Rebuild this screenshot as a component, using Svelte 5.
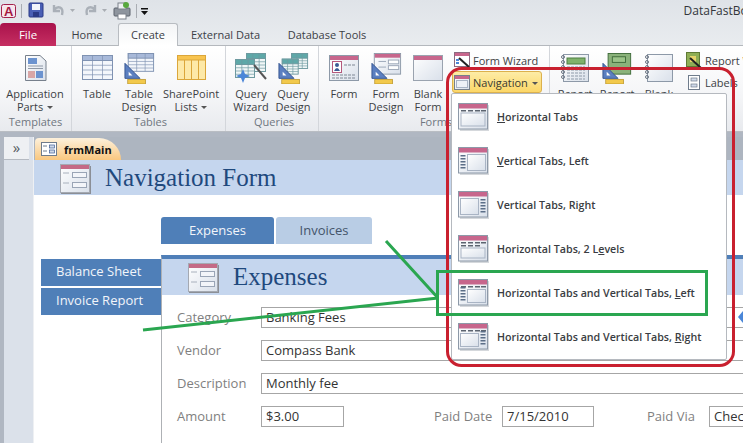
<script>
	const navItems = [
		{ pre: '', key: 'H', post: 'orizontal Tabs', kind: 'h' },
		{ pre: '', key: 'V', post: 'ertical Tabs, Left', kind: 'vl' },
		{ pre: 'Vertical Tabs, Ri', key: 'g', post: 'ht', kind: 'vr' },
		{ pre: 'Horizontal Tabs, 2 L', key: 'e', post: 'vels', kind: 'h2' },
		{ pre: 'Horizontal Tabs and Vertical Tabs, ', key: 'L', post: 'eft', kind: 'hvl' },
		{ pre: 'Horizontal Tabs and Vertical Tabs, ', key: 'R', post: 'ight', kind: 'hvr' }
	];

	const rows = [0, 1, 2, 3, 4];
</script>

{#snippet triangle()}
	<path d="M0 11 L0 27 L16 27 Z" fill="#5b7fc0" stroke="#34548f" />
	<path d="M4 20 L4 24 L8 24 Z" fill="#fff" />
	<rect x="3" y="28" width="19" height="5" fill="#f2c94c" stroke="#b08a20" stroke-width="0.7" />
{/snippet}

{#snippet grid(x, y, w, h, head, line, fill)}
	<rect {x} {y} width={w} height={h} fill={fill} stroke={line} />
	<rect {x} {y} width={w} height="5" fill={head} stroke={line} />
	{#each [1, 2] as i}
		<line x1={x + (w * i) / 3} y1={y} x2={x + (w * i) / 3} y2={y + h} stroke={line} stroke-width="0.7" />
	{/each}
	{#each [1, 2, 3] as i}
		<line x1={x} y1={y + 5 + ((h - 5) * i) / 4} x2={x + w} y2={y + 5 + ((h - 5) * i) / 4} stroke={line} stroke-width="0.7" />
	{/each}
{/snippet}

{#snippet navIcon(kind)}
	<svg class="navicon" width="31" height="28" viewBox="0 0 31 28">
		<rect x="2" y="2" width="29" height="26" fill="#d5d8dc" />
		<rect x="0.5" y="0.5" width="29" height="25.5" fill="url(#paper)" stroke="#8d99a8" />
		<rect x="1" y="1" width="28" height="4.5" fill="#c7668c" />
		{#if kind === 'h' || kind === 'h2' || kind === 'hvl' || kind === 'hvr'}
			{#each [3, 10, 17, 23] as x}
				<rect {x} y="7" width="5" height="1.5" fill="#5c6470" />
			{/each}
		{/if}
		{#if kind === 'h2'}
			{#each [3, 10, 17] as x}
				<rect {x} y="10" width="5" height="1.5" fill="#5c6470" />
			{/each}
		{/if}
		{#if kind === 'vl' || kind === 'hvl'}
			{#each [8, 11, 14, 17, 20] as y}
				<rect x="2.5" {y} width="5" height="1.5" fill="#5c6f88" />
			{/each}
		{/if}
		{#if kind === 'vr' || kind === 'hvr'}
			{#each [8, 11, 14, 17, 20] as y}
				<rect x="22.5" {y} width="5" height="1.5" fill="#5c6f88" />
			{/each}
		{/if}
		{#if kind === 'h'}
			<rect x="3" y="10" width="24" height="13" fill="url(#paper)" stroke="#a9b4c4" />
		{:else if kind === 'h2'}
			<rect x="3" y="13" width="24" height="10" fill="url(#paper)" stroke="#a9b4c4" />
		{:else if kind === 'vl' || kind === 'hvl'}
			<rect x="9.5" y={kind === 'vl' ? 7.5 : 10.5} width="18" height={kind === 'vl' ? 16 : 13} fill="url(#paper)" stroke="#a9b4c4" />
		{:else}
			<rect x="2.5" y={kind === 'vr' ? 7.5 : 10.5} width="18" height={kind === 'vr' ? 16 : 13} fill="url(#paper)" stroke="#a9b4c4" />
		{/if}
	</svg>
{/snippet}

{#snippet formIcon()}
	<svg class="formicon" width="31" height="30" viewBox="0 0 31 30">
		<rect x="1" y="2" width="30" height="28" fill="#8b8f96" />
		<rect x="0.5" y="0.5" width="29" height="28" fill="url(#paper)" stroke="#a4a9b2" />
		<rect x="1" y="1" width="28" height="4" fill="#c46a86" />
		<line x1="3" y1="9" x2="9" y2="9" stroke="#a8b0bc" />
		<rect x="12.5" y="8.5" width="14" height="5" fill="#f3f5f9" stroke="#9aa5b6" />
		<line x1="3" y1="19" x2="9" y2="19" stroke="#a8b0bc" />
		<rect x="12.5" y="18.5" width="14" height="5" fill="#f3f5f9" stroke="#9aa5b6" />
	</svg>
{/snippet}

<div class="app">
	<svg class="defs" width="0" height="0">
		<defs>
			<linearGradient id="paper" x1="0" y1="0" x2="1" y2="1">
				<stop offset="0" stop-color="#ffffff" />
				<stop offset="1" stop-color="#d9e0ea" />
			</linearGradient>
		</defs>
	</svg>

	<header class="titlebar">
		<svg width="150" height="23" viewBox="0 0 150 23">
			<rect x="1.5" y="4.5" width="14" height="13" rx="2" fill="#f6e6ec" stroke="#a3224c" />
			<text x="4" y="16" font-family="Liberation Sans" font-weight="700" font-size="13" fill="#a3173f">A</text>
			<line x1="21.5" y1="4" x2="21.5" y2="18" stroke="#a9adb3" />
			<rect x="29" y="3" width="14" height="14" rx="1" fill="#4a5fb5" stroke="#2b3a86" />
			<rect x="32" y="4" width="8" height="6" fill="#f3f5fb" />
			<rect x="33" y="12" width="6" height="5" fill="#2b3a86" />
			<path d="M54 5 V11 H60 M54 10 C58 5 64 7 62 15" fill="none" stroke="#aab0b8" stroke-width="2.4" />
			<path d="M70 9 h5 l-2.5 3 z" fill="#a9adb3" />
			<path d="M95 5 V11 H89 M95 10 C91 5 85 7 87 15" fill="none" stroke="#aab0b8" stroke-width="2.4" />
			<path d="M102 9 h5 l-2.5 3 z" fill="#a9adb3" />
			<rect x="114" y="8" width="16" height="8" rx="1" fill="#8e959e" stroke="#5c636c" />
			<rect x="118" y="3" width="8" height="6" fill="#eef0f3" stroke="#7c828b" />
			<rect x="118" y="14" width="8" height="5" fill="#fff" stroke="#7c828b" />
			<circle cx="126" cy="5" r="3" fill="#58a83e" />
			<line x1="136.500" y1="4" x2="136.500" y2="18" stroke="#a9adb3" />
			<rect x="141" y="8" width="7" height="1.500" fill="#111" />
			<path d="M141 11 h7 l-3.500 4 z" fill="#111" />
		</svg>
		<span class="doctitle">DataFastBooks</span>
	</header>

	<nav class="tabs">
		<span class="tab file">File</span>
		<span class="tab home">Home</span>
		<span class="tab create">Create</span>
		<span class="tab external">External Data</span>
		<span class="tab tools">Database Tools</span>
	</nav>

	<section class="ribbon">
		<div class="group g1">
			<div class="items">
				<div class="big wide">
					<svg width="31" height="27" viewBox="0 0 31 27">
						<path d="M5.500 .5 H20 L26 6 V25.500 H5.500 Z" fill="url(#paper)" stroke="#77808c" />
						<rect x="8" y="3" width="9" height="6" fill="#6c93cf" />
						<path d="M8 11 H23 M8 13.500 H23" stroke="#8e98a6" />
						<rect x="8" y="16" width="7" height="7" fill="#d9a6a6" />
						<rect x="16" y="16" width="7" height="7" fill="#6c93cf" />
					</svg>
					<span>Application Parts <i class="caret"></i></span>
				</div>
			</div>
			<div class="glabel">Templates</div>
		</div>

		<div class="group g2">
			<div class="items">
				<div class="big">
					<svg width="31" height="27" viewBox="0 0 31 27">
						{@render grid(0.5, 0.5, 30, 24, '#a8b9d9', '#7f92b2', '#f3f6fb')}
					</svg>
					<span>Table</span>
				</div>
				<div class="big">
					<svg width="31" height="31" viewBox="0 0 31 33">
						{@render grid(3.5, 0.5, 27, 19, '#a8b9d9', '#7f92b2', '#f3f6fb')}
						{@render triangle()}
					</svg>
					<span>Table Design</span>
				</div>
				<div class="big share">
					<svg width="31" height="27" viewBox="0 0 31 27">
						<rect x="1.500" y="0.500" width="28" height="24" fill="#fde9a8" stroke="#dba63a" />
						<rect x="1.500" y="0.500" width="28" height="4.500" fill="#f8c44f" stroke="#dba63a" />
						<path d="M8.500 5 V24 M15.500 5 V24 M22.500 5 V24" stroke="#dba63a" />
					</svg>
					<span>SharePoint Lists <i class="caret"></i></span>
				</div>
			</div>
			<div class="glabel">Tables</div>
		</div>

		<div class="group g3">
			<div class="items">
				<div class="big">
					<svg width="34" height="31" viewBox="0 0 34 31">
						{@render grid(12.5, 0.5, 19, 18, '#5ea8a8', '#6e9aa0', '#f1f7f7')}
						{@render grid(1.5, 6.5, 19, 18, '#5ea8a8', '#6e9aa0', '#f1f7f7')}
						<path d="M20 12 L32 26" stroke="#555" stroke-width="2" />
						<path d="M9 16 L11 21 L16 23 L11 25 L9 30 L7 25 L2 23 L7 21 Z" fill="#4b86d8" />
					</svg>
					<span>Query Wizard</span>
				</div>
				<div class="big">
					<svg width="31" height="31" viewBox="0 0 31 33">
						{@render grid(13.5, 0.5, 17, 16, '#5ea8a8', '#6e9aa0', '#f1f7f7')}
						{@render grid(3.5, 6.5, 17, 16, '#5ea8a8', '#6e9aa0', '#f1f7f7')}
						{@render triangle()}
					</svg>
					<span>Query Design</span>
				</div>
			</div>
			<div class="glabel">Queries</div>
		</div>

		<div class="group g4">
			<div class="items">
				<div class="big">
					<svg width="31" height="27" viewBox="0 0 31 27">
						<rect x="0.500" y="0.500" width="29" height="25" fill="url(#paper)" stroke="#8d99a8" />
						<rect x="1" y="1" width="28" height="4" fill="#c7668c" />
						<rect x="3.500" y="6.500" width="9" height="11" fill="#fff" stroke="#b5597c" />
						<circle cx="8" cy="10" r="2" fill="#3d5c94" />
						<path d="M5 16 Q8 10 11 16 Z" fill="#3d5c94" />
						<path d="M15 10 H27 M3 20 H27 M3 23 H27" stroke="#7e8794" stroke-dasharray="3 1" />
					</svg>
					<span>Form</span>
				</div>
				<div class="big">
					<svg width="31" height="31" viewBox="0 0 31 33">
						<rect x="2.500" y="0.500" width="28" height="22" fill="url(#paper)" stroke="#8d99a8" />
						<rect x="3" y="1" width="27" height="4" fill="#c7668c" />
						<path d="M7 9 H15 M7 15 H15" stroke="#9aa5b6" />
						<rect x="17.500" y="7.500" width="11" height="4" fill="#fff" stroke="#9aa5b6" />
						<rect x="17.500" y="13.500" width="11" height="4" fill="#fff" stroke="#9aa5b6" />
						{@render triangle()}
					</svg>
					<span>Form Design</span>
				</div>
				<div class="big">
					<svg width="31" height="27" viewBox="0 0 31 27">
						<rect x="0.500" y="0.500" width="29" height="25" fill="url(#paper)" stroke="#9aa3af" />
						<rect x="1" y="1" width="28" height="4" fill="#c7668c" />
					</svg>
					<span>Blank Form</span>
				</div>
				<div class="small-col">
					<div class="small">
						<svg width="16" height="16" viewBox="0 0 16 16">
							<rect x="0.500" y="0.500" width="15" height="14" fill="#fff" stroke="#8d6a80" />
							<rect x="1" y="1" width="14" height="3" fill="#c7668c" />
							<path d="M5 6 L15 15" stroke="#222" stroke-width="2" />
							<path d="M2 8 h3 M2 11 h3" stroke="#4b86d8" stroke-width="2" />
						</svg>
						<span>Form Wizard</span>
					</div>
					<div class="small active">
						<svg width="16" height="15" viewBox="0 0 16 15">
							<rect x="0.500" y="0.500" width="15" height="14" fill="url(#paper)" stroke="#77808c" />
							<rect x="1" y="1" width="14" height="3" fill="#c7668c" />
							<rect x="2.500" y="5.500" width="11" height="7" fill="#eef1f6" stroke="#a9b4c4" />
						</svg>
						<span>Navigation <i class="caret"></i></span>
					</div>
				</div>
			</div>
			<div class="glabel">Forms</div>
		</div>

		<div class="group g5">
			<div class="items">
				<div class="big">
					<svg width="31" height="29" viewBox="0 0 31 29">
						<rect x="3.500" y="0.500" width="25" height="27" fill="url(#paper)" stroke="#8d99a8" />
						<rect x="7" y="4" width="18" height="6" fill="#7fb26b" stroke="#4f7f43" />
						{#each rows as i}
							<line x1="7" x2="25" y1={13 + i * 3} y2={13 + i * 3} stroke="#8d99a8" stroke-dasharray="3 1" />
						{/each}
						{#each [3, 8, 13, 18, 23] as y}
							<circle cx="3" cy={y} r="1.500" fill="none" stroke="#6d7684" />
						{/each}
					</svg>
					<span>Report</span>
				</div>
				<div class="big">
					<svg width="31" height="31" viewBox="0 0 31 33">
						<rect x="5.500" y="0.500" width="24" height="22" fill="#8ab27a" stroke="#3f6b3a" />
						<rect x="10" y="4" width="14" height="6" fill="#9bc389" stroke="#3f6b3a" />
						{@render triangle()}
					</svg>
					<span>Report Design</span>
				</div>
				<div class="big">
					<svg width="31" height="29" viewBox="0 0 31 29">
						<rect x="3.500" y="0.500" width="25" height="27" fill="url(#paper)" stroke="#8d99a8" />
						{#each [3, 8, 13, 18, 23] as y}
							<circle cx="3" cy={y} r="1.500" fill="none" stroke="#6d7684" />
						{/each}
					</svg>
					<span>Blank Report</span>
				</div>
				<div class="small-col reports">
					<div class="small">
						<svg width="16" height="16" viewBox="0 0 16 16">
							<rect x="0.500" y="0.500" width="13" height="14" fill="#8fae55" stroke="#5f7a34" />
							<rect x="4" y="4" width="6" height="6" fill="#e6d36a" />
							<path d="M4 6 L15 16" stroke="#222" stroke-width="2" />
						</svg>
						<span>Report Wizard</span>
					</div>
					<div class="small">
						<svg width="16" height="15" viewBox="0 0 16 15">
							<rect x="2.500" y="0.500" width="11" height="14" fill="#fff" stroke="#6f7c8c" />
							<rect x="5" y="3" width="6" height="3" fill="#cfd9e8" stroke="#6f7c8c" stroke-width="0.7" />
							<rect x="5" y="9" width="6" height="3" fill="#cfd9e8" stroke="#6f7c8c" stroke-width="0.7" />
						</svg>
						<span>Labels</span>
					</div>
				</div>
			</div>
		</div>
	</section>

	<div class="work">
		<aside class="navpane">
			<div class="shutter">»</div>
		</aside>
		<main class="doc">
			<div class="docstrip">
				<div class="doctab">
					<svg width="16" height="14" viewBox="0 0 16 14">
						<rect x="0.500" y="0.500" width="15" height="13" fill="#fff" stroke="#6f7c8c" />
						<path d="M2 4 H6 M2 9 H6" stroke="#6f7c8c" />
						<rect x="8.500" y="3" width="5" height="3" fill="#cfd9e8" stroke="#3d5c94" stroke-width="0.7" />
						<rect x="8.500" y="8" width="5" height="3" fill="#cfd9e8" stroke="#3d5c94" stroke-width="0.7" />
					</svg>
					<span>frmMain</span>
				</div>
			</div>
			<div class="formhead">
				{@render formIcon()}
				<h1>Navigation Form</h1>
			</div>
			<div class="formbody">
				<div class="sidetabs">
					<div class="sidetab">Balance Sheet</div>
					<div class="sidetab">Invoice Report</div>
				</div>
				<div class="content">
					<div class="toptabs">
						<div class="toptab on">Expenses</div>
						<div class="toptab off">Invoices</div>
					</div>
					<div class="subform">
						<div class="subhead">
							{@render formIcon()}
							<h2>Expenses</h2>
						</div>
						<div class="fields">
							<div class="row">
								<span class="label">Category</span>
								<div class="value long">Banking Fees</div>
								<svg class="diamond" width="10" height="12" viewBox="0 0 10 12">
									<path d="M5 0 L10 6 L5 12 L0 6 Z" fill="#4a86d8" />
								</svg>
							</div>
							<div class="row">
								<span class="label">Vendor</span>
								<div class="value long">Compass Bank</div>
							</div>
							<div class="row">
								<span class="label">Description</span>
								<div class="value long">Monthly fee</div>
							</div>
							<div class="row">
								<span class="label">Amount</span>
								<div class="value amount">$3.00</div>
								<span class="label paid">Paid Date</span>
								<div class="value date">7/15/2010</div>
								<span class="label via">Paid Via</span>
								<div class="value long">Check</div>
							</div>
						</div>
					</div>
				</div>
			</div>
		</main>
	</div>

	<div class="dropdown">
		{#each navItems as item}
			<div class="navitem">
				{@render navIcon(item.kind)}
				<span>{item.pre}<u>{item.key}</u>{item.post}</span>
			</div>
		{/each}
	</div>

	<svg class="marks" width="743" height="443" viewBox="0 0 743 443">
		<rect x="447.500" y="68.500" width="286" height="297" rx="14" fill="none" stroke="#c9202f" stroke-width="3" />
		<path d="M143 330 L438 298 M386 241 L438 298" fill="none" stroke="#2aa650" stroke-width="3" />
		<rect x="437.500" y="271.500" width="269" height="43" fill="none" stroke="#2aa650" stroke-width="3" />
	</svg>
</div>

<style>
	:global(body) {
		margin: 0;
		background: #fff;
	}

	.app {
		position: relative;
		width: 743px;
		height: 443px;
		overflow: hidden;
		font-family: 'Open Sans', 'Noto Sans', sans-serif;
		font-size: 11px;
		color: #3c3f44;
		background: linear-gradient(#dfe3e8, #e9ecef 46px);
	}

	.defs {
		position: absolute;
	}

	svg {
		display: block;
		flex: none;
	}

	.titlebar {
		height: 23px;
		display: flex;
		justify-content: space-between;
	}

	.doctitle {
		margin-top: 3px;
		margin-right: -24px;
		font-size: 12px;
		line-height: 16px;
		color: #33363b;
		white-space: nowrap;
	}

	.tabs {
		height: 23px;
		display: flex;
		border-bottom: 1px solid #b4b8bd;
		box-sizing: border-box;
		font-size: 11px;
	}

	.tab {
		line-height: 23px;
		text-align: center;
		color: #3c4046;
		white-space: nowrap;
		flex: none;
	}

	.file {
		width: 56px;
		height: 23px;
		border-radius: 4px 4px 0 0;
		background: linear-gradient(#a9124b, #c62f62);
		color: #fff;
		font-size: 11.500px;
	}

	.home {
		width: 62px;
	}

	.create {
		width: 58px;
		border: 1px solid #b8bcc1;
		border-bottom: none;
		border-radius: 3px 3px 0 0;
		background: linear-gradient(#f3f4f6, #fff);
		box-sizing: content-box;
		height: 22px;
		line-height: 22px;
	}

	.external {
		width: 95px;
	}

	.tools {
		width: 108px;
	}

	.ribbon {
		height: 86px;
		display: flex;
		background: linear-gradient(#fff, #f4f5f7 60%, #e8eaee);
		border-bottom: 1px solid #b9bdc3;
		box-sizing: border-box;
	}

	.group {
		box-sizing: border-box;
		height: 85px;
		border-right: 1px solid #d3d6db;
		display: flex;
		flex-direction: column;
		flex: none;
	}

	.g1 {
		width: 72px;
	}

	.g2 {
		width: 154px;
		padding-left: 4px;
	}

	.g3 {
		width: 93px;
		padding-left: 4px;
	}

	.g4 {
		width: 231px;
		padding-left: 4px;
	}

	.g5 {
		flex: 1;
		border: none;
		padding-left: 4px;
	}

	.items {
		flex: 1;
		display: flex;
		min-height: 0;
	}

	.glabel {
		height: 16px;
		line-height: 14px;
		text-align: center;
		color: #6f7680;
	}

	.big {
		width: 42px;
		flex: none;
		display: flex;
		flex-direction: column;
		align-items: center;
		text-align: center;
		line-height: 13px;
		padding-top: 7px;
	}

	.big svg {
		height: 31px;
		margin-bottom: 3px;
	}

	.big span {
		display: block;
	}

	.wide {
		width: 70px;
	}

	.share {
		width: 62px;
	}

	.caret {
		display: inline-block;
		width: 0;
		height: 0;
		margin-left: 1px;
		vertical-align: 2px;
		border: 3px solid transparent;
		border-top-color: #555;
		border-bottom: none;
	}

	.small-col {
		margin-left: 3px;
		padding-top: 3px;
		display: flex;
		flex-direction: column;
	}

	.reports {
		margin-left: 4px;
	}

	.small {
		height: 22px;
		padding: 0 4px 0 2px;
		display: flex;
		align-items: center;
		gap: 3px;
		white-space: nowrap;
	}

	.active {
		width: 90px;
		box-sizing: border-box;
		padding-left: 1px;
		border: 1px solid #dcb14d;
		border-radius: 3px;
		background: linear-gradient(#fdeca6, #fcd768);
		color: #3a3a32;
	}

	.work {
		display: flex;
		height: 311px;
		padding-top: 5px;
		background: #b0b7c2;
		box-sizing: border-box;
	}

	.navpane {
		width: 34px;
		flex: none;
		box-sizing: border-box;
		margin-left: 4px;
		background: #dbe1ea;
		border-right: 3px solid #8e949c;
		box-shadow: inset -2px 0 0 #eef0f3;
	}

	.shutter {
		height: 23px;
		width: 25px;
		box-sizing: border-box;
		background: #eef0f3;
		border-bottom: 1px solid #b5bac2;
		font-size: 15px;
		line-height: 21px;
		text-align: center;
		color: #555a60;
	}

	.doc {
		flex: 1;
		min-width: 0;
		margin-left: -4px;
	}

	.docstrip {
		height: 23px;
		background: #adb5c0;
		display: flex;
		align-items: flex-end;
		padding-left: 1px;
	}

	.doctab {
		width: 86px;
		height: 22px;
		box-sizing: border-box;
		padding-left: 6px;
		display: flex;
		align-items: center;
		gap: 7px;
		border-radius: 4px 22px 0 0;
		background: linear-gradient(#fdf1dc, #f9c77f);
		font-size: 11px;
		font-weight: 700;
		color: #111;
	}

	.formhead {
		height: 35px;
		padding-left: 26px;
		display: flex;
		align-items: center;
		gap: 14px;
		background: #c5d6ee;
	}

	.formicon {
		margin-top: 2px;
	}

	h1,
	h2 {
		margin: 0;
		font-family: 'Liberation Serif', serif;
		font-weight: 400;
		font-size: 25px;
		color: #1f497d;
		white-space: nowrap;
	}

	.formbody {
		height: 248px;
		display: flex;
		padding-left: 7px;
		background: #fff;
	}

	.sidetabs {
		width: 120px;
		flex: none;
		margin-top: 64px;
		display: flex;
		flex-direction: column;
		gap: 2px;
	}

	.sidetab {
		height: 27px;
		padding-left: 15px;
		line-height: 25px;
		background: #4f7fb8;
		color: #f2f5fa;
		font-size: 13px;
	}

	.content {
		flex: 1;
		min-width: 0;
		padding-top: 22px;
	}

	.toptabs {
		display: flex;
		gap: 2px;
	}

	.toptab {
		height: 27px;
		line-height: 26px;
		text-align: center;
		border-radius: 3px 3px 0 0;
		font-size: 13px;
	}

	.on {
		width: 113px;
		background: #4f7fb8;
		color: #f2f5fa;
	}

	.off {
		width: 96px;
		background: #b9cde5;
		color: #44546a;
	}

	.subform {
		margin-top: 11px;
		border-top: 4px solid #4f7fb8;
		border-left: 1px solid #aeb1b5;
		height: 188px;
	}

	.subhead {
		height: 36px;
		padding-left: 26px;
		display: flex;
		align-items: center;
		gap: 14px;
		background: #c5d6ee;
	}

	.fields {
		padding: 12px 0 0 15px;
		display: flex;
		flex-direction: column;
		gap: 12px;
	}

	.row {
		position: relative;
		height: 21px;
		display: flex;
		align-items: center;
	}

	.label {
		width: 84px;
		flex: none;
		margin-bottom: 2px;
		color: #7f7f7f;
		font-size: 13px;
	}

	.value {
		height: 21px;
		box-sizing: border-box;
		padding-left: 4px;
		flex: none;
		border: 1px solid #a6a6a6;
		line-height: 19px;
		color: #333;
		font-size: 13px;
		background: #fff;
	}

	.long {
		width: 600px;
	}

	.amount {
		width: 83px;
	}

	.paid {
		margin-left: 90px;
		width: 68px;
	}

	.date {
		width: 92px;
	}

	.via {
		margin-left: 53px;
		width: 62px;
	}

	.diamond {
		position: absolute;
		left: 561px;
		top: 4px;
	}

	.dropdown {
		position: absolute;
		left: 451px;
		top: 93px;
		width: 276px;
		height: 267px;
		box-sizing: border-box;
		padding-top: 1px;
		background: #fff;
		border: 1px solid #b5b9bf;
		border-radius: 2px;
	}

	.navitem {
		height: 44px;
		padding-left: 6px;
		display: flex;
		align-items: center;
		gap: 8px;
		font-size: 10.700px;
		font-weight: 600;
		color: #3a3d42;
		white-space: nowrap;
	}

	.marks {
		position: absolute;
		left: 0;
		top: 0;
	}
</style>
